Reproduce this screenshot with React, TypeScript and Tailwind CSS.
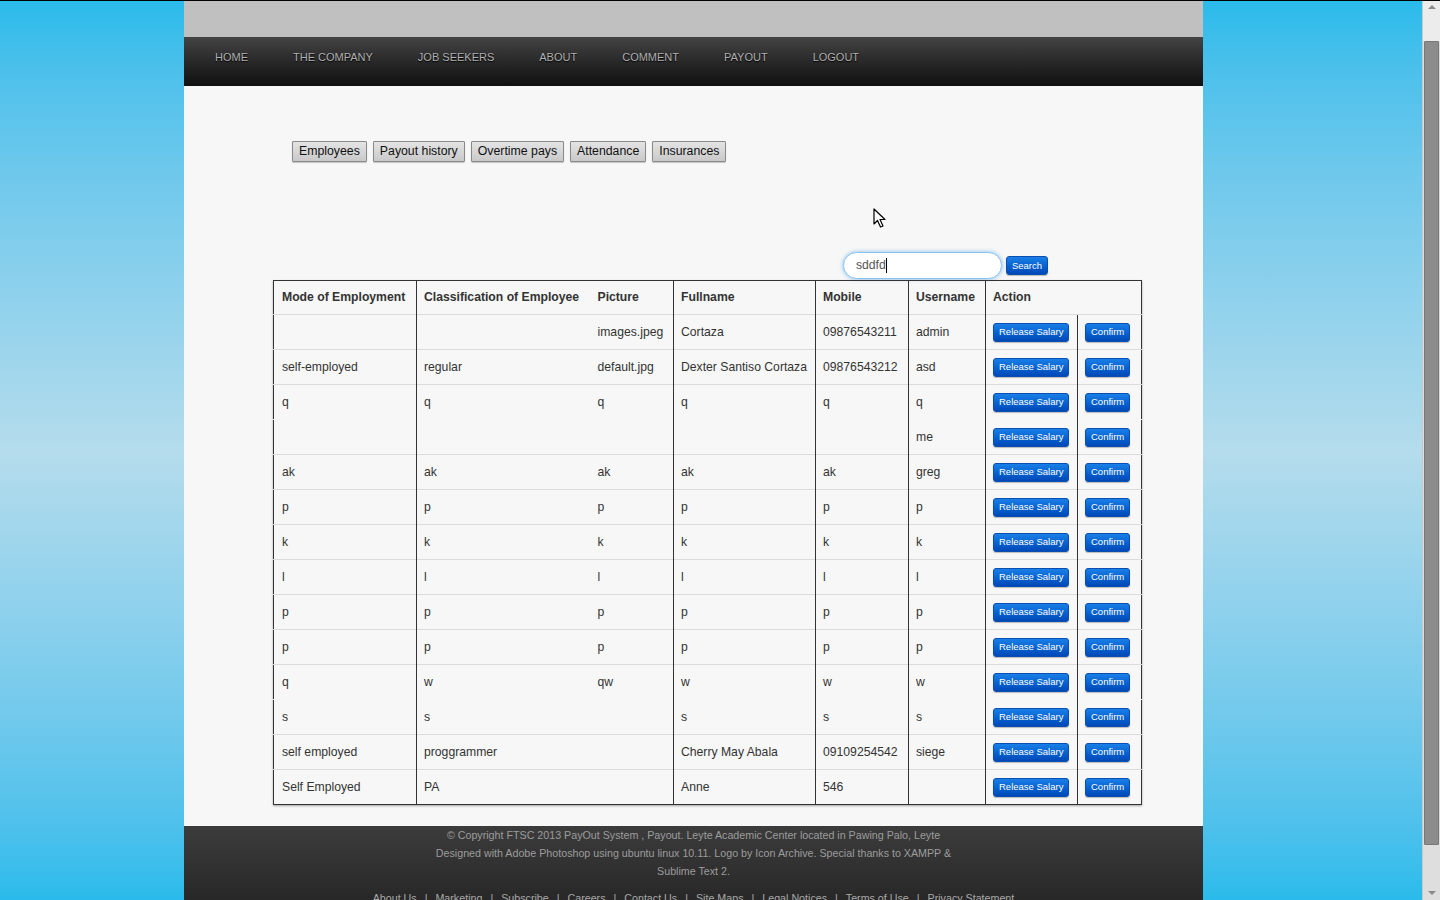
import React from "react";

type Row = {
  mode: string;
  cls: string;
  pic: string;
  name: string;
  mobile: string;
  user: string;
  cont?: boolean;
};

const rows: Row[] = [
  { mode: "", cls: "", pic: "images.jpeg", name: "Cortaza", mobile: "09876543211", user: "admin" },
  { mode: "self-employed", cls: "regular", pic: "default.jpg", name: "Dexter Santiso Cortaza", mobile: "09876543212", user: "asd" },
  { mode: "q", cls: "q", pic: "q", name: "q", mobile: "q", user: "q" },
  { mode: "", cls: "", pic: "", name: "", mobile: "", user: "me", cont: true },
  { mode: "ak", cls: "ak", pic: "ak", name: "ak", mobile: "ak", user: "greg" },
  { mode: "p", cls: "p", pic: "p", name: "p", mobile: "p", user: "p" },
  { mode: "k", cls: "k", pic: "k", name: "k", mobile: "k", user: "k" },
  { mode: "l", cls: "l", pic: "l", name: "l", mobile: "l", user: "l" },
  { mode: "p", cls: "p", pic: "p", name: "p", mobile: "p", user: "p" },
  { mode: "p", cls: "p", pic: "p", name: "p", mobile: "p", user: "p" },
  { mode: "q", cls: "w", pic: "qw", name: "w", mobile: "w", user: "w" },
  { mode: "s", cls: "s", pic: "", name: "s", mobile: "s", user: "s", cont: true },
  { mode: "self employed", cls: "proggrammer", pic: "", name: "Cherry May Abala", mobile: "09109254542", user: "siege" },
  { mode: "Self Employed", cls: "PA", pic: "", name: "Anne", mobile: "546", user: "" },
];

const navItems = ["HOME", "THE COMPANY", "JOB SEEKERS", "ABOUT", "COMMENT", "PAYOUT", "LOGOUT"];
const tabs = ["Employees", "Payout history", "Overtime pays", "Attendance", "Insurances"];
const footerLinks = ["About Us", "Marketing", "Subscribe", "Careers", "Contact Us", "Site Maps", "Legal Notices", "Terms of Use", "Privacy Statement"];

function BlueButton({ label }: { label: string }) {
  return (
    <button className="h-[19px] px-[5px] rounded-[3px] border border-[#0a4fb0] bg-gradient-to-b from-[#1a7fe8] to-[#0048b8] text-white text-[9.5px] leading-none shadow-[0_1px_1px_rgba(0,0,0,0.25)]">
      {label}
    </button>
  );
}

function Cell({ children, left = true, top = true }: { children?: React.ReactNode; left?: boolean; top?: boolean }) {
  return (
    <td
      className={
        "h-[35px] px-[7px] align-middle whitespace-nowrap overflow-hidden border-t " +
        (left ? "border-l border-l-[#333] " : "") +
        (top ? "border-t-[#dcdcdc]" : "border-t-transparent")
      }
    >
      {children}
    </td>
  );
}

export default function App() {
  return (
    <div className="flex h-[900px] overflow-hidden font-['Liberation_Sans',Arial,sans-serif] border-t border-black">
      <div className="relative w-[1422px] h-full bg-gradient-to-b from-[#29bbeb] via-[#b4dcec] to-[#29bbeb]">
        <div className="ml-[184px] w-[1019px] h-full flex flex-col bg-[#f7f7f7]">
          <div className="h-[36px] shrink-0 bg-[#c0c0c0]" />
          <nav className="h-[49px] shrink-0 bg-gradient-to-b from-[#444] to-[#101010] flex items-start pt-[12px] pl-[31px] gap-[45px]">
            {navItems.map((n) => (
              <span key={n} className="text-[11px] text-[#b0b0b0] [text-shadow:0_1px_1px_#000]">
                {n}
              </span>
            ))}
          </nav>

          <div className="shrink-0 pt-[55px] pl-[108px] flex gap-[6px]">
            {tabs.map((t) => (
              <button
                key={t}
                className="h-[21px] px-[6px] border border-[#8a8a8a] rounded-[1px] bg-gradient-to-b from-[#e4e4e4] to-[#c9c9c9] text-[12.3px] text-[#111] leading-none shadow-[0_1px_1px_rgba(0,0,0,0.2)]"
              >
                {t}
              </button>
            ))}
          </div>

          <div className="shrink-0 mt-[90px] flex justify-end items-center pr-[155px] gap-[4px]">
            <div className="w-[159px] h-[27px] rounded-full border border-[#8cc3ee] bg-white shadow-[0_0_4px_rgba(82,168,236,0.7)] flex items-center pl-[12px] text-[12.2px] text-[#555]">
              sddfd<span className="w-px h-[15px] bg-black" />
            </div>
            <BlueButton label="Search" />
          </div>

          <div className="shrink-0 ml-[89px] mt-[1px] w-[868px]">
            <table className="table-fixed border-collapse w-[868px] border border-[#333] shadow-[0_1px_2px_rgba(0,0,0,0.35)] text-[12.2px] text-[#333]">
              <colgroup>
                <col className="w-[143px]" />
                <col className="w-[174px]" />
                <col className="w-[83px]" />
                <col className="w-[142px]" />
                <col className="w-[93px]" />
                <col className="w-[77px]" />
                <col className="w-[92px]" />
                <col className="w-[64px]" />
              </colgroup>
              <thead>
                <tr className="text-left text-[12.2px] text-[#333] whitespace-nowrap">
                  <th className="h-[34px] pl-[8px] pr-0 font-bold overflow-hidden">Mode of Employment</th>
                  <th className="px-[7px] border-l border-l-[#333] font-bold">Classification of Employee</th>
                  <th className="px-[7px] font-bold">Picture</th>
                  <th className="px-[7px] border-l border-l-[#333] font-bold">Fullname</th>
                  <th className="px-[7px] border-l border-l-[#333] font-bold">Mobile</th>
                  <th className="px-[7px] border-l border-l-[#333] font-bold">Username</th>
                  <th colSpan={2} className="px-[7px] border-l border-l-[#333] font-bold">Action</th>
                </tr>
              </thead>
              <tbody>
                {rows.map((r, i) => (
                  <tr key={i}>
                    <Cell left={false} top={!r.cont}>
                      <span className="pl-px">{r.mode}</span>
                    </Cell>
                    <Cell top={!r.cont}>{r.cls}</Cell>
                    <Cell left={false} top={!r.cont}>{r.pic}</Cell>
                    <Cell top={!r.cont}>{r.name}</Cell>
                    <Cell top={!r.cont}>{r.mobile}</Cell>
                    <Cell top={!r.cont}>{r.user}</Cell>
                    <Cell top={!r.cont}>
                      <BlueButton label="Release Salary" />
                    </Cell>
                    <Cell top={!r.cont}>
                      <BlueButton label="Confirm" />
                    </Cell>
                  </tr>
                ))}
              </tbody>
            </table>
          </div>

          <footer className="mt-[21px] flex-1 shrink-0 min-h-[120px] bg-gradient-to-b from-[#3c3c3c] to-[#1c1c1c] text-center text-[10.7px] text-[#9c9c9c]">
            <p className="max-w-[525px] mx-auto leading-[18px]">
              © Copyright FTSC 2013 PayOut System , Payout. Leyte Academic Center located in Pawing Palo, Leyte Designed
              with Adobe Photoshop using ubuntu linux 10.11. Logo by Icon Archive. Special thanks to XAMPP &amp; Sublime
              Text 2.
            </p>
            <div className="mt-[10px] flex justify-center gap-[8px] text-[#a8a8a8]">
              {footerLinks.map((l, i) => (
                <React.Fragment key={l}>
                  {i > 0 && <span>|</span>}
                  <span>{l}</span>
                </React.Fragment>
              ))}
            </div>
          </footer>
        </div>

        <svg className="absolute left-[873px] top-[207px]" width="14" height="22" viewBox="0 0 14 22">
          <path d="M1 1 L1 16 L4.5 12.5 L7.5 19 L10 18 L7 11.5 L12 11.5 Z" fill="#fff" stroke="#000" strokeWidth="1.2" strokeLinejoin="round" />
        </svg>
      </div>

      <div className="w-[18px] h-full flex flex-col bg-[#dedede] border-l border-[#c8c8c8]">
        <div className="h-[40px] shrink-0 flex items-start justify-center pt-[3px] bg-[#ececec]">
          <svg width="8" height="6" viewBox="0 0 8 6">
            <path d="M0 5 L4 1 L8 5 Z" fill="#8a8a8a" />
          </svg>
        </div>
        <div className="mx-[1px] h-[804px] shrink-0 bg-[#8c8c8c] border border-[#777] rounded-[1px]" />
        <div className="flex-1 flex items-end justify-center pb-[4px]">
          <svg width="8" height="6" viewBox="0 0 8 6">
            <path d="M0 1 L4 5 L8 1 Z" fill="#8a8a8a" />
          </svg>
        </div>
      </div>
    </div>
  );
}
